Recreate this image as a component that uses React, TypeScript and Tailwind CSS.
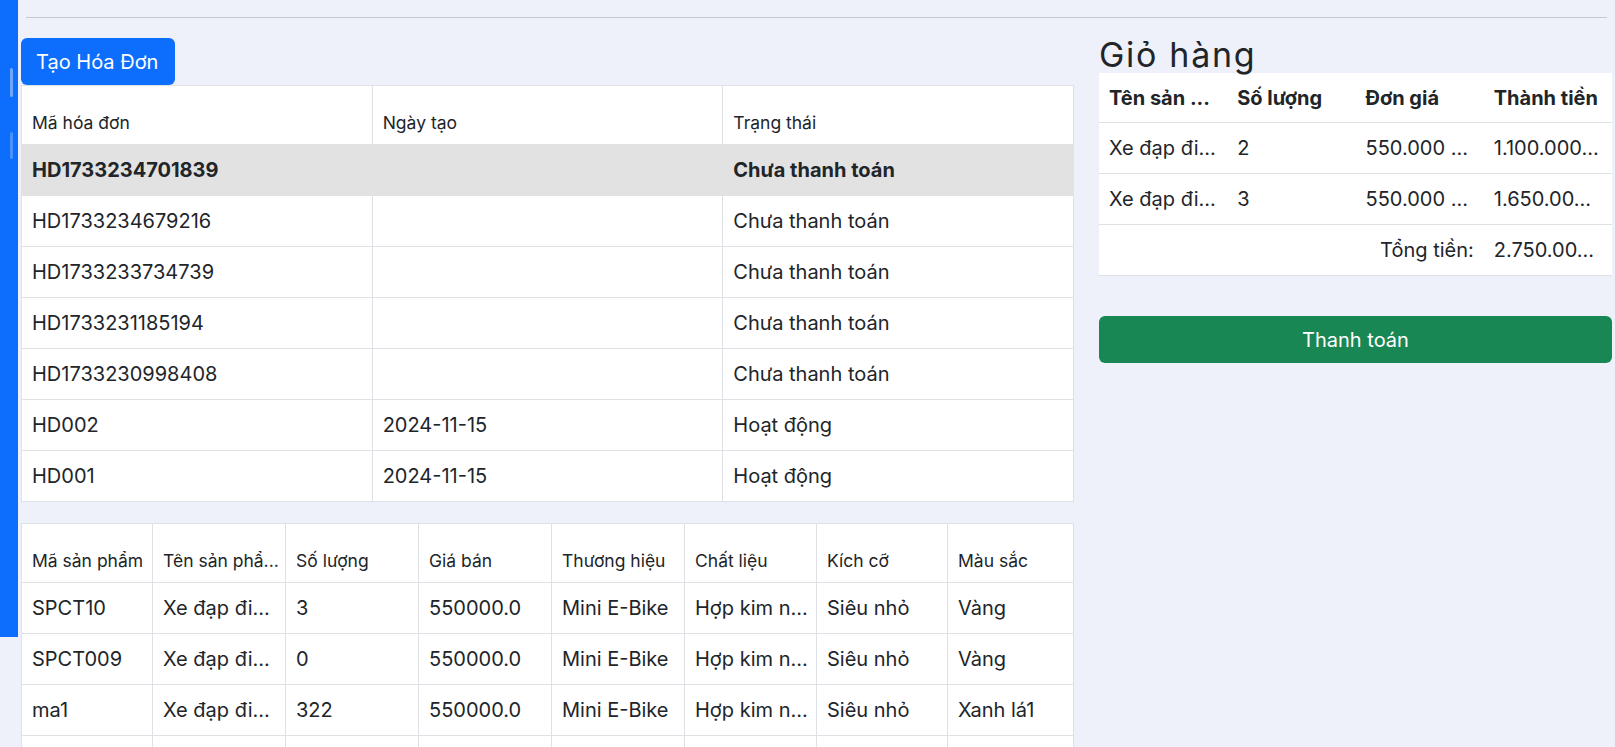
import React from "react";

const invoices = [
  { code: "HD1733234701839", date: "", status: "Chưa thanh toán", active: true },
  { code: "HD1733234679216", date: "", status: "Chưa thanh toán" },
  { code: "HD1733233734739", date: "", status: "Chưa thanh toán" },
  { code: "HD1733231185194", date: "", status: "Chưa thanh toán" },
  { code: "HD1733230998408", date: "", status: "Chưa thanh toán" },
  { code: "HD002", date: "2024-11-15", status: "Hoạt động" },
  { code: "HD001", date: "2024-11-15", status: "Hoạt động" },
];

const productCols = ["Mã sản phẩm", "Tên sản phẩ...", "Số lượng", "Giá bán", "Thương hiệu", "Chất liệu", "Kích cỡ", "Màu sắc"];

const products = [
  ["SPCT10", "Xe đạp đi...", "3", "550000.0", "Mini E-Bike", "Hợp kim n...", "Siêu nhỏ", "Vàng"],
  ["SPCT009", "Xe đạp đi...", "0", "550000.0", "Mini E-Bike", "Hợp kim n...", "Siêu nhỏ", "Vàng"],
  ["ma1", "Xe đạp đi...", "322", "550000.0", "Mini E-Bike", "Hợp kim n...", "Siêu nhỏ", "Xanh lá1"],
];

const cart = [
  ["Xe đạp đi...", "2", "550.000 ...", "1.100.000..."],
  ["Xe đạp đi...", "3", "550.000 ...", "1.650.00..."],
];

export default function App() {
  return (
    <div className="flex h-screen overflow-hidden bg-[#eef1f9] font-['Inter',sans-serif] text-[#212529]">
      <aside className="flex h-[637px] w-[18px] shrink-0 flex-col items-end gap-[35px] bg-[#0d6efd] pr-[5px] pt-[68px]">
        <span className="h-[29px] w-[3px] rounded bg-white/40" />
        <span className="h-[27px] w-[3px] rounded bg-white/25" />
      </aside>

      <main className="flex-1 px-[3px]">
        <hr className="mx-[5px] mt-[17px] border-[#c6c9cf]" />

        <div className="mt-[16px] flex items-start gap-[25px]">
          <section className="w-[1053px] shrink-0 pt-[4px]">
            <button className="h-[47px] w-[154px] rounded-[6px] bg-[#0d6efd] px-[15px] text-left text-[20px] text-white">
              Tạo Hóa Đơn
            </button>

            <div className="grid grid-cols-3 border-l border-t border-[#dee2e6] bg-white">
              {["Mã hóa đơn", "Ngày tạo", "Trạng thái"].map((col) => (
                <div key={col} className="flex h-[59px] items-end border-b border-r border-[#dee2e6] px-[10px] pb-[8px] text-[17.5px] leading-[26px]">
                  {col}
                </div>
              ))}
              {invoices.map((inv) =>
                [inv.code, inv.date, inv.status].map((val, i) => (
                  <div
                    key={inv.code + i}
                    className={`flex h-[51px] items-center border-b border-r px-[10px] text-[20px] leading-[30px] ${
                      inv.active ? "border-b-[#dee2e6] border-r-transparent bg-[#e2e2e2] font-bold" : "border-[#dee2e6]"
                    }`}
                  >
                    {val}
                  </div>
                ))
              )}
            </div>

            <div className="mt-[21px] grid grid-cols-[131px_133px_133px_133px_133px_132px_131px_1fr] border-l border-t border-[#dee2e6] bg-white">
              {productCols.map((col) => (
                <div key={col} className="flex h-[59px] items-end whitespace-nowrap border-b border-r border-[#dee2e6] px-[10px] pb-[8px] text-[17.5px] leading-[26px]">
                  {col}
                </div>
              ))}
              {products.map((row, r) =>
                row.map((val, i) => (
                  <div key={r + "-" + i} className="flex h-[51px] items-center whitespace-nowrap border-b border-r border-[#dee2e6] px-[10px] text-[20px] leading-[30px]">
                    {val}
                  </div>
                ))
              )}
              {productCols.map((col) => (
                <div key={"empty-" + col} className="h-[51px] border-b border-r border-[#dee2e6]" />
              ))}
            </div>
          </section>

          <section className="mt-[3px] flex-1">
            <h3 className="text-[34px] font-normal leading-[36px] tracking-[1.7px]">Giỏ hàng</h3>

            <div className="grid grid-cols-4 bg-white">
              {["Tên sản ...", "Số lượng", "Đơn giá", "Thành tiền"].map((col) => (
                <div key={col} className="flex h-[50px] items-center whitespace-nowrap border-b border-[#dee2e6] px-[10px] text-[20px] font-bold leading-[30px]">
                  {col}
                </div>
              ))}
              {cart.map((row, r) =>
                row.map((val, i) => (
                  <div key={r + "-" + i} className="flex h-[51px] items-center whitespace-nowrap border-b border-[#dee2e6] px-[10px] text-[20px] leading-[30px]">
                    {val}
                  </div>
                ))
              )}
              <div className="col-span-3 flex h-[51px] items-center justify-end border-b border-[#dee2e6] px-[10px] text-[20px] leading-[30px]">
                Tổng tiền:
              </div>
              <div className="flex h-[51px] items-center whitespace-nowrap border-b border-[#dee2e6] px-[10px] text-[20px] leading-[30px]">
                2.750.00...
              </div>
            </div>

            <button className="mt-[40px] h-[47px] w-full rounded-[6px] bg-[#198754] text-[20px] text-white">
              Thanh toán
            </button>
          </section>
        </div>
      </main>
    </div>
  );
}
